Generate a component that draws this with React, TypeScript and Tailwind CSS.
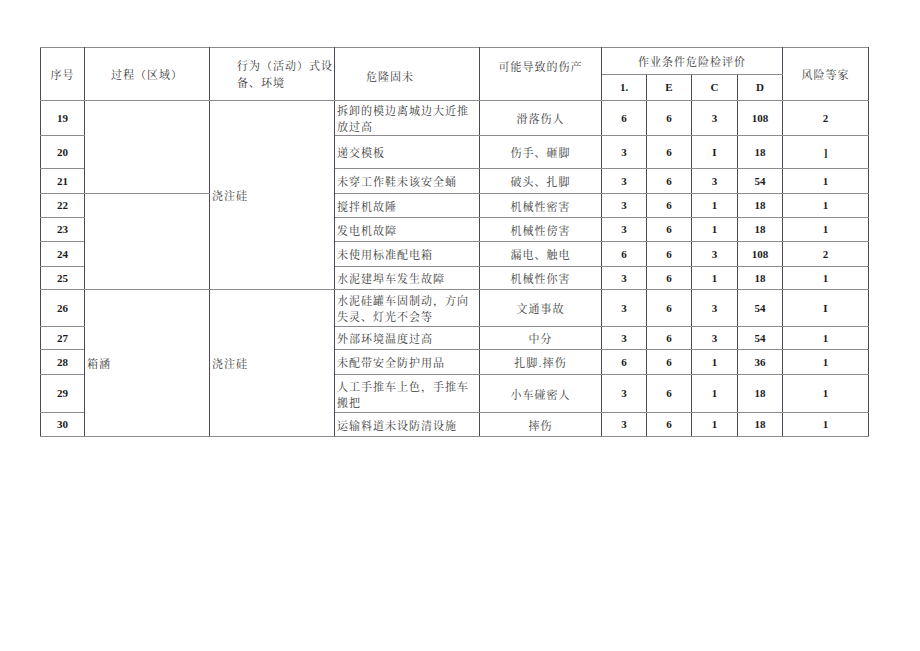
import React from "react";

const cjk = "font-['Noto_Serif_CJK_SC','Noto_Sans_CJK_SC',serif] text-[11px] tracking-[1px] text-[#3a3a3a] leading-[16px]";
const num = "font-['Liberation_Serif','Noto_Sans_CJK_SC',serif] font-bold text-[11px] text-[#1a1a1a] text-center align-middle";
const cell = "border border-x-[#4d4853] border-y-[#8f8a8f] p-0";

type Row = {
  n: string;
  h: string;
  danger: React.ReactNode;
  injury: string;
  l: string;
  e: string;
  c: string;
  d: string;
  r: string;
};

const rows: Row[] = [
  { n: "19", h: "h-[35px]", danger: <>拆卸的模边离城边大近推<br />放过高</>, injury: "滑落伤人", l: "6", e: "6", c: "3", d: "108", r: "2" },
  { n: "20", h: "h-[33px]", danger: "递交模板", injury: "伤手、砸脚", l: "3", e: "6", c: "I", d: "18", r: "]" },
  { n: "21", h: "h-[25px]", danger: "未穿工作鞋未该安全蛹", injury: "破头、扎脚", l: "3", e: "6", c: "3", d: "54", r: "1" },
  { n: "22", h: "h-[24px]", danger: "搅拌机故陲", injury: "机械性密害", l: "3", e: "6", c: "1", d: "18", r: "1" },
  { n: "23", h: "h-[24px]", danger: "发电机故障", injury: "机械性傍害", l: "3", e: "6", c: "1", d: "18", r: "1" },
  { n: "24", h: "h-[25px]", danger: "未使用标准配电箱", injury: "漏电、触电", l: "6", e: "6", c: "3", d: "108", r: "2" },
  { n: "25", h: "h-[23px]", danger: "水泥建埠车发生故障", injury: "机械性你害", l: "3", e: "6", c: "1", d: "18", r: "1" },
  { n: "26", h: "h-[37px]", danger: <>水泥硅罐车固制动，方向<br />失灵、灯光不会等</>, injury: "文通事故", l: "3", e: "6", c: "3", d: "54", r: "I" },
  { n: "27", h: "h-[23px]", danger: "外部环境温度过高", injury: "中分", l: "3", e: "6", c: "3", d: "54", r: "1" },
  { n: "28", h: "h-[25px]", danger: "未配带安全防护用品", injury: "扎脚.摔伤", l: "6", e: "6", c: "1", d: "36", r: "1" },
  { n: "29", h: "h-[38px]", danger: <>人工手推车上色，手推车<br />搬把</>, injury: "小车碰密人", l: "3", e: "6", c: "1", d: "18", r: "1" },
  { n: "30", h: "h-[24px]", danger: "运输料道未设防清设施", injury: "摔伤", l: "3", e: "6", c: "1", d: "18", r: "1" },
];

export default function App() {
  return (
    <div className="w-[920px] h-[651px] bg-white pt-[47px] pl-[40px]">
      <table className="table-fixed border-collapse w-[828px]">
        <colgroup>
          <col className="w-[44px]" />
          <col className="w-[125px]" />
          <col className="w-[125px]" />
          <col className="w-[145px]" />
          <col className="w-[122px]" />
          <col className="w-[45px]" />
          <col className="w-[45px]" />
          <col className="w-[46px]" />
          <col className="w-[45px]" />
          <col className="w-[86px]" />
        </colgroup>
        <thead>
          <tr className="h-[27px]">
            <th rowSpan={2} className={`${cell} ${cjk} font-normal text-center align-middle`}>序号</th>
            <th rowSpan={2} className={`${cell} ${cjk} font-normal text-center align-middle`}>过程（区域）</th>
            <th rowSpan={2} className={`${cell} ${cjk} font-normal text-left align-top pt-[9px] pl-[27px] leading-[17px]`}>
              行为（活动）式设<br />备、环境
            </th>
            <th rowSpan={2} className={`${cell} ${cjk} font-normal text-left align-middle pl-[31px] pt-[3px]`}>危隆固未</th>
            <th rowSpan={2} className={`${cell} ${cjk} font-normal text-center align-top pt-[10px]`}>可能导致的伤产</th>
            <th colSpan={4} className={`${cell} ${cjk} font-normal text-center align-middle`}>作业条件危险检评价</th>
            <th rowSpan={2} className={`${cell} ${cjk} font-normal text-center align-middle`}>风险等家</th>
          </tr>
          <tr className="h-[26px]">
            <th className={`${cell} ${num}`}>1.</th>
            <th className={`${cell} ${num}`}>E</th>
            <th className={`${cell} ${num}`}>C</th>
            <th className={`${cell} ${num}`}>D</th>
          </tr>
        </thead>
        <tbody>
          {rows.map((r, i) => (
            <tr key={r.n} className={r.h}>
              <td className={`${cell} ${num}`}>{r.n}</td>
              {i === 0 && <td rowSpan={3} className={`${cell}`}></td>}
              {i === 3 && <td rowSpan={4} className={`${cell}`}></td>}
              {i === 7 && (
                <td rowSpan={5} className={`${cell} ${cjk} text-left align-middle pl-[2px]`}>箱涵</td>
              )}
              {i === 0 && (
                <td rowSpan={7} className={`${cell} ${cjk} text-left align-middle pl-[2px]`}>浇注硅</td>
              )}
              {i === 7 && (
                <td rowSpan={5} className={`${cell} ${cjk} text-left align-middle pl-[2px]`}>浇注硅</td>
              )}
              <td className={`${cell} ${cjk} text-left align-middle pl-[2px] whitespace-nowrap`}>{r.danger}</td>
              <td className={`${cell} ${cjk} text-center align-middle`}>{r.injury}</td>
              <td className={`${cell} ${num}`}>{r.l}</td>
              <td className={`${cell} ${num}`}>{r.e}</td>
              <td className={`${cell} ${num}`}>{r.c}</td>
              <td className={`${cell} ${num}`}>{r.d}</td>
              <td className={`${cell} ${num}`}>{r.r}</td>
            </tr>
          ))}
        </tbody>
      </table>
    </div>
  );
}
